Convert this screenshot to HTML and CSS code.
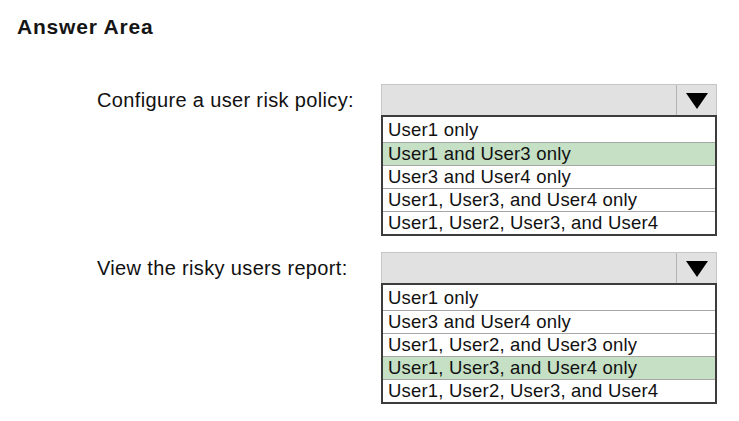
FILE: index.html
```html
<!DOCTYPE html>
<html>
<head>
<meta charset="utf-8">
<link rel="stylesheet" href="styles.css">
</head>
<body>
<div class="page">
  <h1 class="title">Answer Area</h1>
  <div class="rows">
    <div class="row">
      <div class="label">Configure a user risk policy:</div>
      <div class="dd">
        <div class="dd-head"><div class="dd-value"></div><div class="dd-btn"><span class="tri"></span></div></div>
        <ul class="dd-list">
          <li>User1 only</li>
          <li class="sel">User1 and User3 only</li>
          <li>User3 and User4 only</li>
          <li>User1, User3, and User4 only</li>
          <li>User1, User2, User3, and User4</li>
        </ul>
      </div>
    </div>
    <div class="row">
      <div class="label">View the risky users report:</div>
      <div class="dd">
        <div class="dd-head"><div class="dd-value"></div><div class="dd-btn"><span class="tri"></span></div></div>
        <ul class="dd-list">
          <li>User1 only</li>
          <li>User3 and User4 only</li>
          <li>User1, User2, and User3 only</li>
          <li class="sel">User1, User3, and User4 only</li>
          <li>User1, User2, User3, and User4</li>
        </ul>
      </div>
    </div>
  </div>
</div>
</body>
</html>
```
FILE: styles.css
```css
html, body {
  margin: 0;
  padding: 0;
  background: #ffffff;
}
body {
  font-family: "Liberation Sans", Arial, sans-serif;
  color: #111111;
}
.page {
  width: 739px;
  height: 421px;
  padding-top: 14px;
  box-sizing: border-box;
}
.title {
  margin: 0;
  padding-left: 17px;
  font-size: 21px;
  line-height: 25px;
  font-weight: bold;
  letter-spacing: 0.8px;
  color: #151515;
}
.rows {
  margin-top: 45px;
  display: flex;
  flex-direction: column;
  gap: 16px;
}
.row {
  display: flex;
  align-items: flex-start;
  padding-left: 97px;
}
.label {
  width: 284px;
  padding-top: 5px;
  font-size: 20px;
  line-height: 23px;
  letter-spacing: 0.35px;
  white-space: nowrap;
}
.dd {
  width: 336px;
}
.dd-head {
  height: 31px;
  box-sizing: border-box;
  display: flex;
  background: #e1e1e1;
  border: 1px solid #c6c6c6;
  border-bottom: none;
}
.dd-value {
  flex: 1;
}
.dd-btn {
  width: 39px;
  border-left: 1px solid #b4b4b4;
  display: flex;
  align-items: center;
  justify-content: center;
}
.tri {
  width: 0;
  height: 0;
  border-left: 11px solid transparent;
  border-right: 11px solid transparent;
  border-top: 16px solid #000000;
  margin-top: 1px;
}
.dd-list {
  list-style: none;
  margin: 0;
  padding: 0;
  border: 2px solid #3c3c3c;
  background: #ffffff;
}
.dd-list li {
  height: 22px;
  line-height: 22px;
  padding-left: 5px;
  font-size: 18.5px;
  letter-spacing: 0.2px;
  border-top: 1px solid #a6a6a6;
  white-space: nowrap;
}
.dd-list li:first-child {
  border-top: none;
  height: 25px;
  line-height: 25px;
}
.dd-list li.sel {
  background: #c5e0c4;
}
```
